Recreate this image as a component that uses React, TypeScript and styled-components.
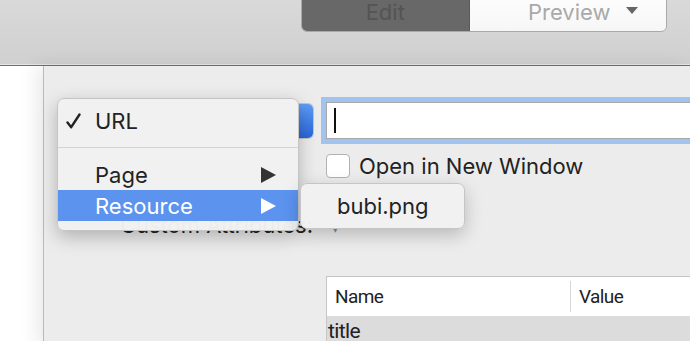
import React from "react";
import styled, { createGlobalStyle } from "styled-components";

const ui_font = `Inter, "Open Sans", "Liberation Sans", sans-serif`;
const menu_text_color = "#222";
const highlight_color = "#5b93ef";

const GlobalStyle = createGlobalStyle`
  html, body {
    margin: 0;
    padding: 0;
    background: #ffffff;
  }
  #root {
    width: 690px;
    height: 341px;
    overflow: hidden;
  }
`;

function Triangle(props) {
  return (
    <TriangleSvg width="15" height="16" viewBox="0 0 15 16">
      <polygon points="0,0 15,8 0,16" fill={props.color} />
    </TriangleSvg>
  );
}

function CheckIcon() {
  return (
    <CheckSvg width="15" height="16" viewBox="0 0 15 16">
      <path
        d="M1.5 9.5 L5.2 14.2 L13.5 1.5"
        fill="none"
        stroke="#222"
        strokeWidth="2.4"
        strokeLinecap="round"
        strokeLinejoin="round"
      />
    </CheckSvg>
  );
}

function App() {
  return (
    <Screen>
      <GlobalStyle />
      <Toolbar>
        <Segmented>
          <SegmentButton active>Edit</SegmentButton>
          <SegmentButton shift="30px">
            Preview
            <DropArrow />
          </SegmentButton>
        </Segmented>
      </Toolbar>

      <Body>
        <Gutter />
        <Panel>
          <FormGrid>
            <LabelCell>
              <PopupButton>
                <Stepper />
              </PopupButton>
            </LabelCell>
            <TextField>
              <Caret />
            </TextField>

            <LabelCell />
            <CheckRow>
              <CheckBox />
              <span>Open in New Window</span>
            </CheckRow>

            <LabelCell offset="18px">
              <SectionLabel>Custom Attributes:</SectionLabel>
            </LabelCell>
            <Disclosure>▾</Disclosure>

            <LabelCell />
            <Table>
              <TableHeader>
                <HeaderCell width="243px">Name</HeaderCell>
                <HeaderCell>Value</HeaderCell>
              </TableHeader>
              <TableRow>title</TableRow>
            </Table>
          </FormGrid>
        </Panel>
      </Body>

      <Menu>
        <MenuItem>
          <CheckMark>
            <CheckIcon />
          </CheckMark>
          <MenuLabel>URL</MenuLabel>
        </MenuItem>
        <MenuSeparator />
        <MenuItem>
          <CheckMark />
          <MenuLabel>Page</MenuLabel>
          <Triangle color="#333" />
        </MenuItem>
        <MenuItem highlighted>
          <CheckMark />
          <MenuLabel>Resource</MenuLabel>
          <Triangle color="#ffffff" />
        </MenuItem>
      </Menu>

      <SubMenu>
        <SubMenuItem>bubi.png</SubMenuItem>
      </SubMenu>
    </Screen>
  );
}

const Screen = styled.div`
  position: relative;
  width: 690px;
  height: 341px;
  font-family: ${ui_font};
  display: flex;
  flex-direction: column;
`;

const Toolbar = styled.div`
  height: 65px;
  flex-shrink: 0;
  background: linear-gradient(#d9d9d9, #d0d0d0);
  border-bottom: 1px solid #e6e6e6;
  box-shadow: 0 1px 0 #6f6f6f;
  display: flex;
  justify-content: flex-end;
  align-items: flex-start;
  padding-right: 23px;
  box-sizing: border-box;
`;

const Segmented = styled.div`
  display: flex;
  margin-top: -10px;
  border-radius: 6px;
  overflow: hidden;
  border: 1px solid #a9a9a9;
  width: 364px;
`;

const SegmentButton = styled.div<{ active?: boolean; shift?: string }>`
  flex: 1;
  height: 40px;
  display: flex;
  align-items: center;
  justify-content: center;
  gap: 15px;
  font-size: 22px;
  padding-top: 2px;
  padding-left: ${(p) => p.shift || "0"};
  box-sizing: border-box;
  background: ${(p) => (p.active ? "#686868" : "linear-gradient(#ffffff, #f6f6f6)")};
  color: ${(p) => (p.active ? "#545454" : "#a9a9a9")};
  border-left: ${(p) => (p.active ? "none" : "1px solid #5a5a5a")};
`;

const DropArrow = styled.span`
  width: 0;
  height: 0;
  border-left: 6.5px solid transparent;
  border-right: 6.5px solid transparent;
  border-top: 7px solid #666;
  margin-top: -4px;
`;

const Body = styled.div`
  flex: 1;
  display: flex;
  margin-top: 1px;
`;

const Gutter = styled.div`
  width: 43px;
  flex-shrink: 0;
  background: #ffffff;
`;

const Panel = styled.div`
  flex: 1;
  background: #ececec;
  border-left: 1px solid #b9b9b9;
  box-shadow: -6px 0 18px rgba(0, 0, 0, 0.09);
  padding-top: 36px;
`;

const FormGrid = styled.div`
  display: grid;
  grid-template-columns: 282px 1fr;
  grid-template-rows: 37px 24px auto auto;
  row-gap: 15px;
  align-items: center;
`;

const LabelCell = styled.div<{ offset?: string }>`
  display: flex;
  justify-content: flex-end;
  align-items: center;
  padding-right: 13px;
  margin-top: ${(p) => p.offset || "0"};
`;

const PopupButton = styled.div`
  width: 246px;
  height: 34px;
  background: #ffffff;
  border-radius: 5px;
  box-shadow: 0 0 0 1px #c4c4c4;
  display: flex;
  justify-content: flex-end;
`;

const Stepper = styled.div`
  width: 14px;
  height: 100%;
  border-radius: 0 5px 5px 0;
  background: linear-gradient(#5d9df7, #2a66d9);
`;

const TextField = styled.div`
  height: 37px;
  background: #ffffff;
  border: 1px solid #a8a8a8;
  box-shadow: 0 0 0 5px #a3c3ef;
  display: flex;
  align-items: center;
  padding-left: 7px;
  margin-right: -20px;
  box-sizing: border-box;
`;

const Caret = styled.span`
  width: 2px;
  height: 25px;
  background: #111;
`;

const CheckRow = styled.div`
  display: flex;
  align-items: center;
  gap: 9px;
  font-size: 22px;
  color: ${menu_text_color};
`;

const CheckBox = styled.span`
  width: 22px;
  height: 22px;
  border-radius: 4px;
  border: 1px solid #b2b2b2;
  background: #ffffff;
`;

const SectionLabel = styled.span`
  font-size: 22px;
  line-height: 28px;
  color: ${menu_text_color};
`;

const Disclosure = styled.span`
  font-size: 13px;
  color: #8a8a8a;
  padding-left: 6px;
  margin-top: 24px;
`;

const Table = styled.div`
  margin-top: 22px;
  border: 1px solid #c6c6c6;
  border-right: none;
  background: #ffffff;
  font-family: Roboto, "Liberation Sans", sans-serif;
  font-size: 19px;
  letter-spacing: -0.6px;
  color: #222;
`;

const TableHeader = styled.div`
  height: 39px;
  display: flex;
  align-items: center;
`;

const HeaderCell = styled.div<{ width?: string }>`
  width: ${(p) => p.width || "auto"};
  flex: ${(p) => (p.width ? "none" : "1")};
  padding-left: 8px;
  height: 31px;
  display: flex;
  align-items: center;
  box-sizing: border-box;
  & + & {
    border-left: 1px solid #d6d6d6;
  }
`;

const TableRow = styled.div`
  height: 30px;
  background: #dcdcdc;
  padding-left: 1px;
  display: flex;
  align-items: center;
  font-size: 21px;
`;

const Menu = styled.div`
  position: absolute;
  left: 57px;
  top: 98px;
  width: 242px;
  padding: 6px 0 9px;
  background: rgba(241, 241, 241, 0.98);
  border: 1px solid #c5c5c5;
  border-radius: 7px;
  box-shadow: 0 6px 18px rgba(0, 0, 0, 0.25);
  box-sizing: border-box;
  overflow: hidden;
`;

const MenuItem = styled.div<{ highlighted?: boolean }>`
  height: 31px;
  display: flex;
  align-items: center;
  padding-left: 8px;
  padding-right: 22px;
  font-size: 22px;
  background: ${(p) => (p.highlighted ? highlight_color : "transparent")};
  color: ${(p) => (p.highlighted ? "#ffffff" : menu_text_color)};
`;

const CheckMark = styled.span`
  width: 29px;
  display: flex;
  align-items: center;
`;

const CheckSvg = styled.svg`
  display: block;
  margin-top: 1px;
`;

const MenuLabel = styled.span`
  flex: 1;
`;

const TriangleSvg = styled.svg`
  display: block;
`;

const MenuSeparator = styled.div`
  height: 1px;
  background: #d4d4d4;
  margin: 11px 0 11px;
`;

const SubMenu = styled.div`
  position: absolute;
  left: 300px;
  top: 183px;
  width: 165px;
  height: 46px;
  background: rgba(241, 241, 241, 0.98);
  border: 1px solid #c5c5c5;
  border-radius: 7px;
  box-shadow: 0 6px 18px rgba(0, 0, 0, 0.22);
  box-sizing: border-box;
  display: flex;
  align-items: center;
`;

const SubMenuItem = styled.div`
  padding-left: 36px;
  font-size: 22px;
  color: ${menu_text_color};
`;

export default App;
